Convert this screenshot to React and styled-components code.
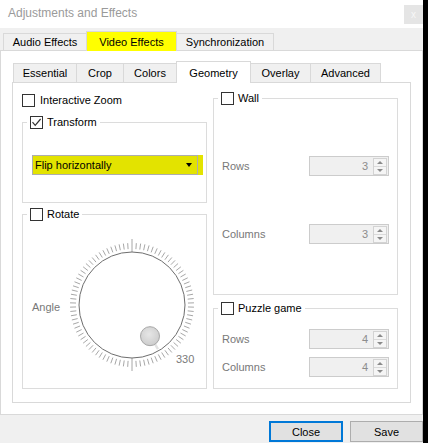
import React from 'react';
import styled, { createGlobalStyle } from 'styled-components';

const Global = createGlobalStyle`
  html, body { margin: 0; padding: 0; background: #000; }
  body { font-family: "Liberation Sans", Arial, sans-serif; font-size: 11px; color: #000; }
  #root { width: 428px; height: 443px; overflow: hidden; }
  * { box-sizing: border-box; }
`;

const Window = styled.div`
  width: 423px;
  height: 443px;
  background: #f0f0f0;
  display: flex;
  flex-direction: column;
`;

const TitleBar = styled.div`
  height: 28px;
  flex: none;
  background: #fff;
  display: flex;
  align-items: flex-start;
  justify-content: space-between;
  padding-top: 5px;
`;

const Title = styled.div`
  font-size: 12px;
  line-height: 16px;
  color: #9a9a9a;
  padding-left: 8px;
`;

const CloseX = styled.div`
  width: 19px;
  height: 19px;
  background: #e5e5e5;
  color: #f7f7f7;
  font-size: 10px;
  display: flex;
  align-items: center;
  justify-content: center;
`;

const Main = styled.div`
  display: flex;
  flex-direction: column;
  padding-top: 3px;
`;

const TabBar = styled.div`
  display: flex;
  align-items: flex-end;
  height: ${p => p.$h}px;
  padding-left: ${p => p.$pl}px;
  flex: none;
`;

const Tab = styled.div`
  width: ${p => p.$w}px;
  height: ${p => (p.$active ? p.$h + 3 : p.$h)}px;
  margin-left: -1px;
  border: 1px solid #d9d9d9;
  border-bottom: none;
  background: ${p => (p.$active ? p.$hl || '#fff' : '#f0f0f0')};
  display: flex;
  align-items: center;
  justify-content: center;
  white-space: nowrap;
  position: relative;
  z-index: ${p => (p.$active ? 1 : 0)};
  margin-bottom: ${p => (p.$active ? -1 : 0)}px;
  &:first-child { margin-left: 0; }
`;

const OuterPane = styled.div`
  height: 365px;
  border: 1px solid #d9d9d9;
  background: #fff;
  padding: 10px 11px 11px 11px;
  display: flex;
  flex-direction: column;
`;

const InnerPane = styled.div`
  height: 321px;
  border: 1px solid #d9d9d9;
  background: #fff;
  padding: 9px 12px 0 9px;
  display: grid;
  grid-template-columns: 185px 185px;
  column-gap: 6px;
  align-items: start;
`;

const Column = styled.div`
  display: flex;
  flex-direction: column;
  padding-top: ${p => p.$pt || 0}px;
`;

const CheckRow = styled.div`
  display: flex;
  align-items: center;
  gap: 5px;
  height: 13px;
  line-height: 13px;
`;

const Box = styled.span`
  width: 13px;
  height: 13px;
  border: 1px solid #333;
  background: #fff;
  display: inline-flex;
  align-items: center;
  justify-content: center;
  flex: none;
`;

const GroupBox = styled.div`
  border: 1px solid #dcdcdc;
  display: flex;
  flex-direction: column;
  margin-top: ${p => p.$mt || 0}px;
  padding-bottom: ${p => p.$pb || 0}px;
`;

const GroupTitle = styled.div`
  align-self: flex-start;
  display: flex;
  align-items: center;
  gap: 4px;
  height: 13px;
  line-height: 13px;
  margin: -7px 0 0 4px;
  padding: 0 3px;
  background: #fff;
`;

const Combo = styled.div`
  margin: 26px 0 27px 9px;
  width: 166px;
  height: 20px;
  border: 1px solid #adadad;
  background: #e3e300;
  box-shadow: 5px 0 0 #e3e300;
  display: flex;
  align-items: center;
  justify-content: space-between;
  padding: 0 5px 0 2px;
`;

const Arrow = styled.span`
  width: 0;
  height: 0;
  border-left: 3.5px solid transparent;
  border-right: 3.5px solid transparent;
  border-top: 4px solid #000;
`;

const DialRow = styled.div`
  display: flex;
  align-items: center;
  margin: 14px 0 13px 9px;
`;

const MutedLabel = styled.span`
  color: #787878;
  width: ${p => (p.$w ? `${p.$w}px` : 'auto')};
  margin-top: ${p => p.$mt || 0}px;
`;

const SpinRow = styled.div`
  display: flex;
  align-items: center;
  justify-content: space-between;
  padding: 0 8px;
  margin-top: ${p => p.$mt}px;
`;

const SpinBox = styled.div`
  width: 80px;
  height: 20px;
  border: 1px solid #cccccc;
  background: #f0f0f0;
  display: flex;
  align-items: center;
  justify-content: flex-end;
  padding-right: 1px;
`;

const SpinValue = styled.span`
  color: #8c8c8c;
  margin-right: 5px;
`;

const SpinButtons = styled.div`
  width: 14px;
  height: 17px;
  border: 1px solid #d3d3d3;
  background: #f5f5f5;
  display: flex;
  flex-direction: column;
`;

const SpinHalf = styled.div`
  flex: 1;
  display: flex;
  align-items: center;
  justify-content: center;
  border-top: ${p => (p.$down ? '1px solid #dadada' : 'none')};
`;

const Tri = styled.span`
  width: 0;
  height: 0;
  border-left: 3px solid transparent;
  border-right: 3px solid transparent;
  ${p => (p.$down ? 'border-top: 3px solid #8a8a8a;' : 'border-bottom: 3px solid #8a8a8a;')}
`;

const ButtonBar = styled.div`
  display: flex;
  justify-content: flex-end;
  gap: 7px;
  margin-top: 6px;
`;

const Button = styled.div`
  width: ${p => p.$w}px;
  height: 21px;
  background: #e1e1e1;
  border: ${p => (p.$default ? '2px solid #0078d7' : '1px solid #adadad')};
  display: flex;
  align-items: center;
  justify-content: center;
`;

function CheckBox({ checked }) {
  return (
    <Box>
      {checked && (
        <svg width="11" height="11" viewBox="0 0 11 11">
          <path d="M1.5 5.2 L4.2 8.3 L9.6 2" stroke="#333" strokeWidth="1.2" fill="none" />
        </svg>
      )}
    </Box>
  );
}

function Spin({ value }) {
  return (
    <SpinBox>
      <SpinValue>{value}</SpinValue>
      <SpinButtons>
        <SpinHalf><Tri /></SpinHalf>
        <SpinHalf $down><Tri $down /></SpinHalf>
      </SpinButtons>
    </SpinBox>
  );
}

function Dial() {
  const cx = 70;
  const cy = 70;
  const ticks = [];
  const n = 90;
  for (let i = 0; i < n; i++) {
    const a = (i * 360 / n) * Math.PI / 180;
    const major = i % 45 === 0;
    const r1 = major ? 53 : 56;
    const r2 = major ? 66 : 62;
    const s = Math.sin(a);
    const c = Math.cos(a);
    ticks.push(
      <line key={i} x1={cx + r1 * s} y1={cy - r1 * c} x2={cx + r2 * s} y2={cy - r2 * c} />
    );
  }
  const ka = 150 * Math.PI / 180;
  const kx = cx + 36 * Math.sin(ka);
  const ky = cy - 36 * Math.cos(ka);
  return (
    <svg width="140" height="140" viewBox="0 0 140 140">
      <defs>
        <radialGradient id="knob" cx="45%" cy="40%" r="60%">
          <stop offset="0%" stopColor="#e6e6e6" />
          <stop offset="100%" stopColor="#cdcdcd" />
        </radialGradient>
      </defs>
      <g stroke="#909090" strokeWidth="0.8">{ticks}</g>
      <circle cx={cx} cy={cy} r="53" fill="#fff" stroke="#6e6e6e" strokeWidth="1" />
      <line x1={kx + 5} y1={ky + 8} x2={kx + 8} y2={ky + 13} stroke="#e2e2e2" strokeWidth="2.5" />
      <circle cx={kx} cy={ky} r="9.5" fill="url(#knob)" stroke="#a6a6a6" strokeWidth="1" />
      <text x="114" y="128" fontFamily='"Liberation Sans", Arial, sans-serif' fontSize="11" fill="#7a7a7a">330</text>
    </svg>
  );
}

export default function App() {
  return (
    <>
      <Global />
      <Window>
        <TitleBar>
          <Title>Adjustments and Effects</Title>
          <CloseX>x</CloseX>
        </TitleBar>
        <Main>
          <TabBar $h={19} $pl={3}>
            <Tab $w={84} $h={17}>Audio Effects</Tab>
            <Tab $w={91} $h={17} $active $hl="#ffff00">Video Effects</Tab>
            <Tab $w={98} $h={17}>Synchronization</Tab>
          </TabBar>
          <OuterPane>
            <TabBar $h={21} $pl={1}>
              <Tab $w={64} $h={19}>Essential</Tab>
              <Tab $w={48} $h={19}>Crop</Tab>
              <Tab $w={54} $h={19}>Colors</Tab>
              <Tab $w={75} $h={19} $active>Geometry</Tab>
              <Tab $w={61} $h={19}>Overlay</Tab>
              <Tab $w={71} $h={19}>Advanced</Tab>
            </TabBar>
            <InnerPane>
              <Column $pt={2}>
                <CheckRow>
                  <CheckBox />
                  <span>Interactive Zoom</span>
                </CheckRow>
                <GroupBox $mt={15}>
                  <GroupTitle>
                    <CheckBox checked />
                    <span>Transform</span>
                  </GroupTitle>
                  <Combo>
                    <span>Flip horizontally</span>
                    <Arrow />
                  </Combo>
                </GroupBox>
                <GroupBox $mt={11}>
                  <GroupTitle>
                    <CheckBox />
                    <span>Rotate</span>
                  </GroupTitle>
                  <DialRow>
                    <MutedLabel $w={30} $mt={4}>Angle</MutedLabel>
                    <Dial />
                  </DialRow>
                </GroupBox>
              </Column>
              <Column>
                <GroupBox $mt={6} $pb={50}>
                  <GroupTitle>
                    <CheckBox />
                    <span>Wall</span>
                  </GroupTitle>
                  <SpinRow $mt={51}>
                    <MutedLabel>Rows</MutedLabel>
                    <Spin value={3} />
                  </SpinRow>
                  <SpinRow $mt={48}>
                    <MutedLabel>Columns</MutedLabel>
                    <Spin value={3} />
                  </SpinRow>
                </GroupBox>
                <GroupBox $mt={13} $pb={11}>
                  <GroupTitle>
                    <CheckBox />
                    <span>Puzzle game</span>
                  </GroupTitle>
                  <SpinRow $mt={14}>
                    <MutedLabel>Rows</MutedLabel>
                    <Spin value={4} />
                  </SpinRow>
                  <SpinRow $mt={8}>
                    <MutedLabel>Columns</MutedLabel>
                    <Spin value={4} />
                  </SpinRow>
                </GroupBox>
              </Column>
            </InnerPane>
          </OuterPane>
          <ButtonBar>
            <Button $w={74} $default>Close</Button>
            <Button $w={73}>Save</Button>
          </ButtonBar>
        </Main>
      </Window>
    </>
  );
}
